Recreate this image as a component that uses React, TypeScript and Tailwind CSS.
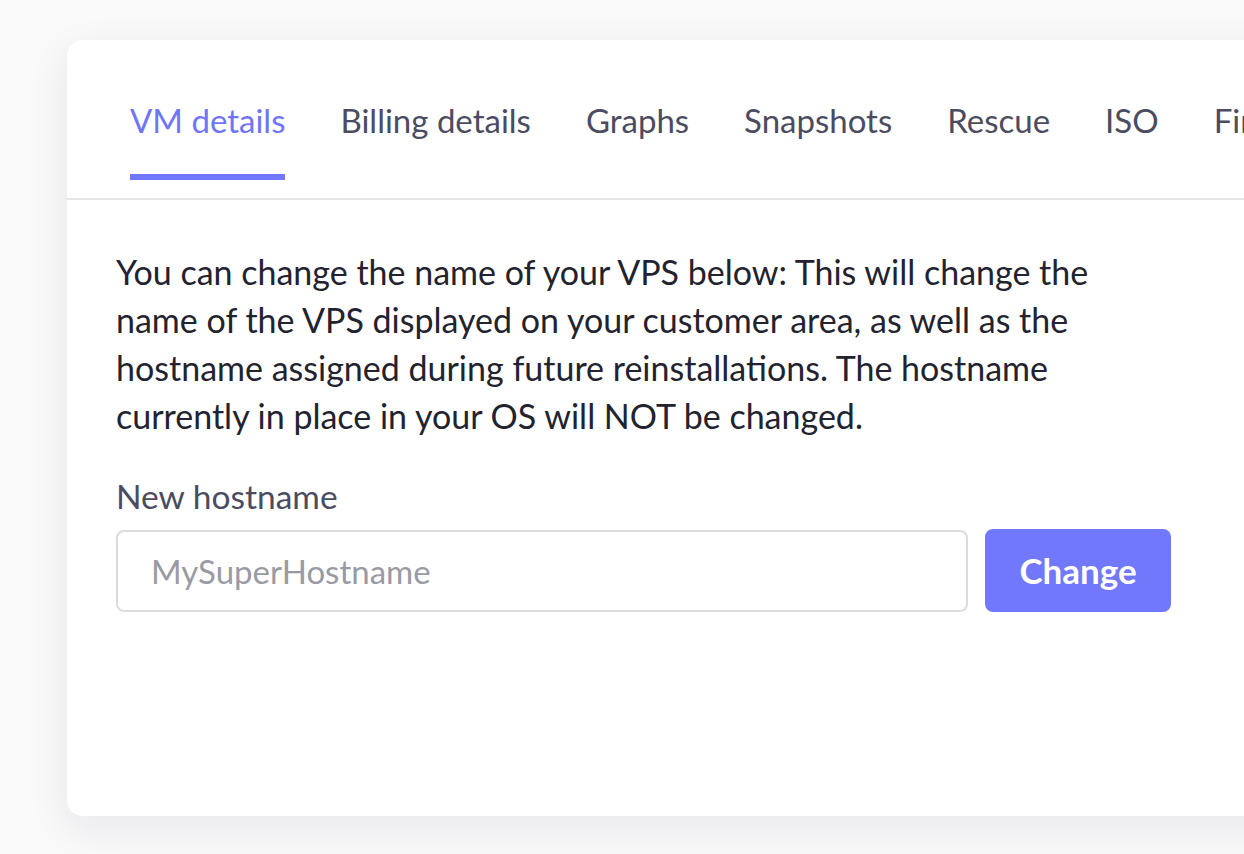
import React from "react";

const tabs = ["VM details", "Billing details", "Graphs", "Snapshots", "Rescue", "ISO", "Firewall", "Reinstall"];

export default function App() {
  return (
    <div className="w-[1244px] h-[854px] overflow-hidden bg-[#f9f9fa] font-['Lato','Noto_Sans',sans-serif]">
      <div className="pt-[40px] pl-[67px]">
        <div className="w-[1400px] h-[776px] bg-white rounded-[16px] shadow-[0_12px_40px_rgba(30,30,50,0.08)]">
          <nav className="flex gap-[55px] pl-[63px] border-b-2 border-[#e6e6e8]">
            {tabs.map((t, i) => (
              <div key={t} className="flex flex-col pt-[60px]">
                <span
                  className={
                    "text-[33px] leading-[40px] whitespace-nowrap " +
                    (i === 0 ? "text-[#6f75f6]" : "text-[#4b4c5f]")
                  }
                >
                  {t}
                </span>
                <div className={"mt-[34px] h-[6px] mb-[18px] " + (i === 0 ? "bg-[#7077fa]" : "bg-transparent")} />
              </div>
            ))}
          </nav>
          <div className="pl-[49px] pt-[48px]">
            <p className="text-[34px] leading-[48px] text-[#23232f] whitespace-nowrap">
              <span className="block">You can change the name of your VPS below: This will change the</span>
              <span className="block">name of the VPS displayed on your customer area, as well as the</span>
              <span className="block">hostname assigned during future reinstallations. The hostname</span>
              <span className="block">currently in place in your OS will NOT be changed.</span>
            </p>
            <div className="mt-[36px] text-[33.5px] leading-[40px] text-[#4b4c5f]">New hostname</div>
            <div className="mt-[14px] flex items-stretch gap-[17px]">
              <input
                placeholder="MySuperHostname"
                className="w-[852px] h-[82px] border-2 border-[#dcdcdc] rounded-[8px] px-[33px] text-[33px] text-[#23232f] placeholder:text-[#9a9aa3] outline-none"
              />
              <button className="w-[186px] h-[83px] -mt-px rounded-[8px] bg-[#7278fb] text-white text-[35px] font-bold">
                Change
              </button>
            </div>
          </div>
        </div>
      </div>
    </div>
  );
}
